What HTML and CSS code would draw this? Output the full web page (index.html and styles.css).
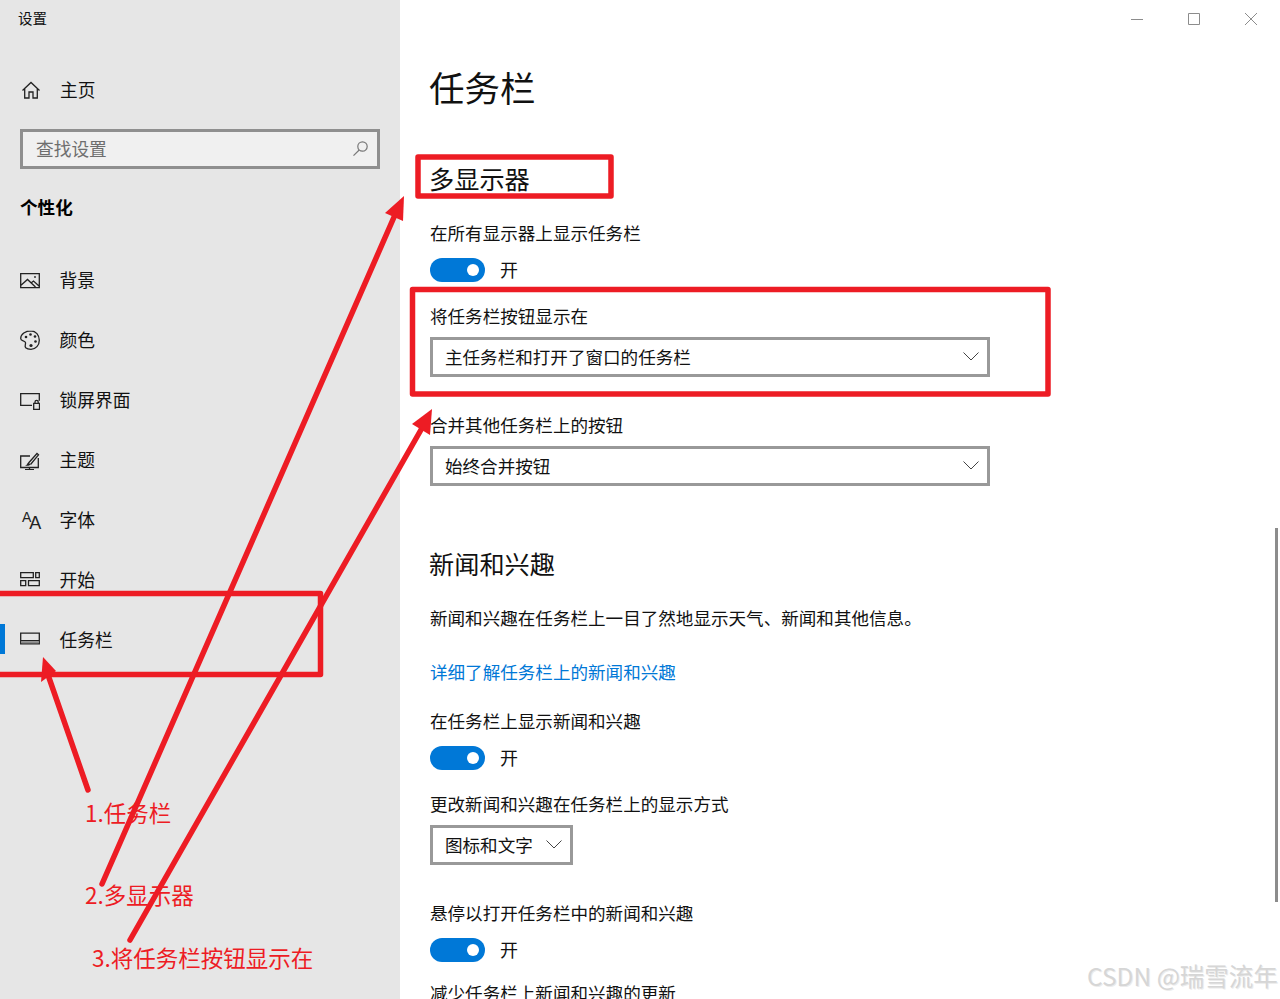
FILE: index.html
```html
<!DOCTYPE html>
<html lang="zh-CN">
<head>
<meta charset="utf-8">
<title>设置</title>
<link rel="stylesheet" href="styles.css">
</head>
<body>
<div class="window">
  <aside class="sidebar">
    <div class="app-title">设置</div>
    <div class="home">
      <svg class="icon" width="20" height="20" viewBox="0 0 20 20"><path d="M1.500 10.500 10 2.500l8.500 8M3.700 9v9h4.300v-6h4v6h4.300V9"/></svg>
      <span>主页</span>
    </div>
    <div class="search">
      <span>查找设置</span>
      <svg class="search-icon" width="17" height="17" viewBox="0 0 17 17"><circle cx="10.500" cy="6.500" r="4.700"/><path d="M7.200 10 1.500 15.700"/></svg>
    </div>
    <div class="section-title">个性化</div>
    <nav class="nav">
      <div class="nav-item">
        <svg class="icon" width="20" height="20" viewBox="0 0 20 20"><path d="M.7 3.700h18.600v14H.7zM.7 15.500 7.500 9.500l8 7.500M11 13l2.500-2 5.500 5"/><circle class="dot" cx="15" cy="7" r=".9"/></svg>
        <span>背景</span>
      </div>
      <div class="nav-item">
        <svg class="icon" width="20" height="20" viewBox="0 0 20 20"><path d="M11 .8C5.500.8.700 4 .7 8.500c0 3 4.300 1.800 4.800 4.200.4 2-1.300 3.300.2 5 1.500 1.500 3.500 1.600 5.300 1.600 4.800 0 8.300-4 8.300-9.100S15.800.8 11 .8z"/><circle class="dot" cx="6" cy="7" r="1.300"/><circle class="dot" cx="10.500" cy="4.500" r="1.300"/><circle class="dot" cx="15" cy="6.500" r="1.300"/><circle class="dot" cx="15.500" cy="11.500" r="1.300"/><circle class="dot" cx="11" cy="15.500" r="1.600"/></svg>
        <span>颜色</span>
      </div>
      <div class="nav-item">
        <svg class="icon" width="20" height="20" viewBox="0 0 20 20"><path d="M12 15.300H.7V3.700h18.600v7M13.700 13.300h5.800v6.200h-5.800zM15 13.300V12c0-2.300 3.200-2.300 3.200 0v1.300"/></svg>
        <span>锁屏界面</span>
      </div>
      <div class="nav-item">
        <svg class="icon" width="20" height="20" viewBox="0 0 20 20"><path d="M10 6H.7v11.500h17.600V8M5 19.600h9M9.500 17.500v2.100M8.500 13 17 3.500l1.500 1.300L10.500 14.500"/><path class="fill" d="M5 15.500c2.500 0 2-3 3.500-3l2 2c-1 1.500-3.500 1.500-5.500 1z"/></svg>
        <span>主题</span>
      </div>
      <div class="nav-item">
        <span class="font-icon"><span class="font-icon-s">A</span><span class="font-icon-l">A</span></span>
        <span>字体</span>
      </div>
      <div class="nav-item">
        <svg class="icon" width="20" height="20" viewBox="0 0 20 20"><path d="M.7 2.700h12.600v5H.7zM15.700 2.700h3.600v5h-3.600zM.7 10.700h5v5h-5zM8.500 10.700h10.800v5H8.500z"/></svg>
        <span>开始</span>
      </div>
      <div class="nav-item active">
        <svg class="icon" width="20" height="20" viewBox="0 0 20 20"><path d="M.7 3.200h18.600v10.600H.7zM.7 10.700h18.600"/><path class="shade" d="M1 12.200h18"/></svg>
        <span>任务栏</span>
      </div>
    </nav>
  </aside>

  <main class="content">
    <div class="caption-buttons">
      <svg width="12" height="12" viewBox="0 0 12 12"><path d="M0 6.500h12"/></svg>
      <svg width="12" height="12" viewBox="0 0 12 12"><path d="M.5.500h11v11H.5z"/></svg>
      <svg width="12" height="12" viewBox="0 0 12 12"><path d="M0 0l12 12M12 0 0 12"/></svg>
    </div>
    <h1 class="page-title">任务栏</h1>

    <h2 class="group-title first">多显示器</h2>
    <div class="label after-title">在所有显示器上显示任务栏</div>
    <div class="toggle-row"><span class="toggle"></span><span class="toggle-text">开</span></div>
    <div class="label after-toggle">将任务栏按钮显示在</div>
    <div class="select wide"><span>主任务栏和打开了窗口的任务栏</span><svg width="16" height="9" viewBox="0 0 16 9"><path d="M.5.500 8 8l7.500-7.500"/></svg></div>
    <div class="label after-select">合并其他任务栏上的按钮</div>
    <div class="select wide"><span>始终合并按钮</span><svg width="16" height="9" viewBox="0 0 16 9"><path d="M.5.500 8 8l7.500-7.500"/></svg></div>

    <h2 class="group-title second">新闻和兴趣</h2>
    <div class="label after-title">新闻和兴趣在任务栏上一目了然地显示天气、新闻和其他信息。</div>
    <div class="label link">详细了解任务栏上的新闻和兴趣</div>
    <div class="label after-link">在任务栏上显示新闻和兴趣</div>
    <div class="toggle-row"><span class="toggle"></span><span class="toggle-text">开</span></div>
    <div class="label after-toggle">更改新闻和兴趣在任务栏上的显示方式</div>
    <div class="select narrow"><span>图标和文字</span><svg width="16" height="9" viewBox="0 0 16 9"><path d="M.5.500 8 8l7.500-7.500"/></svg></div>
    <div class="label after-select">悬停以打开任务栏中的新闻和兴趣</div>
    <div class="toggle-row"><span class="toggle"></span><span class="toggle-text">开</span></div>
    <div class="label after-last">减少任务栏上新闻和兴趣的更新</div>
    <div class="scrollbar"></div>
  </main>
</div>

<svg class="annotations" width="1280" height="999" viewBox="0 0 1280 999">
  <g class="marks">
    <rect x="418" y="157" width="193" height="39"/>
    <rect x="412.500" y="289.500" width="635.500" height="104.500"/>
    <path d="M-5 593.500H320.500V674.500H-5"/>
    <path d="M88 790 47 672"/>
    <path d="M102 884 398 208"/>
    <path d="M130 940 426 421"/>
  </g>
  <g class="heads">
    <path d="M43 657 41 682 56 671z"/>
    <path d="M404 196 385 213 403 221z"/>
    <path d="M432 409 412 424 430 435z"/>
  </g>
</svg>
<div class="note note-1">1.任务栏</div>
<div class="note note-2">2.多显示器</div>
<div class="note note-3">3.将任务栏按钮显示在</div>
<div class="watermark">CSDN @瑞雪流年</div>
</body>
</html>
```
FILE: styles.css
```css
* { box-sizing: border-box; }
html, body { margin: 0; height: 100%; overflow: hidden; }
body {
  font-family: "Noto Sans CJK SC", "Noto Sans", sans-serif;
  font-size: 17.570px;
  color: #111;
  background: #fff;
}
.window { display: flex; height: 999px; }

.sidebar { width: 400px; flex: none; background: #e6e6e6; }
.app-title { height: 38px; line-height: 36px; padding-left: 18px; font-size: 14.500px; }
.home { display: flex; align-items: center; gap: 19px; height: 60px; margin-top: 22px; padding: 0 0 2px 21px; font-size: 17.700px; }
.home .icon { margin-bottom: -2px; }
.icon { flex: none; fill: none; stroke: #222; stroke-width: 1.300; }
.icon .dot, .icon .fill { fill: #222; stroke: none; }
.icon .shade { stroke: #888; stroke-width: 1.800; }
.search {
  display: flex; align-items: center; justify-content: space-between;
  width: 360px; height: 40px; margin: 9px 0 0 20px; padding: 0 8px 2px 13px;
  border: 3px solid #8f8f8f; background: #f0f0f0; color: #6e6e6e; font-size: 17.700px;
}
.search-icon { fill: none; stroke: #777; stroke-width: 1.200; margin-left: 2px; }
.section-title { height: 40px; line-height: 38px; margin-top: 19px; padding-left: 20px; font-size: 17.600px; font-weight: 700; color: #000; }
.nav { margin-top: 22px; }
.nav-item { position: relative; display: flex; align-items: center; gap: 19.400px; height: 60px; padding: 0 0 2px 20px; font-size: 17.750px; }
.nav-item .icon, .nav-item .font-icon { position: relative; top: 1px; }
.nav-item.active::before { content: ""; position: absolute; left: 0; top: 14px; width: 5px; height: 30px; background: #0078d7; }
.font-icon { display: flex; align-items: flex-start; width: 20px; height: 20px; padding-left: 2px; font-family: "Liberation Sans", sans-serif; color: #222; }
.font-icon-s { font-size: 14px; line-height: 14px; }
.font-icon-l { font-size: 18px; line-height: 18px; margin: 4px 0 0 -2px; }

.content { position: relative; flex: 1; padding: 64px 0 0 30px; }
.caption-buttons { position: absolute; top: 13px; left: 731px; display: flex; gap: 45px; }
.caption-buttons svg { fill: none; stroke: #8c8c8c; stroke-width: 1; }
.page-title { margin: 0 0 0 -1px; height: 50px; line-height: 46px; font-size: 35.500px; font-weight: 400; }
.group-title { margin: 0 0 0 -1px; height: 36px; line-height: 33px; font-size: 25.200px; font-weight: 400; }
.group-title.first { margin-top: 48px; }
.group-title.second { margin-top: 61px; }
.label { height: 26px; line-height: 26px; white-space: nowrap; }
.after-title { margin-top: 22px; }
.after-toggle { margin-top: 21px; }
.after-select { margin-top: 35px; }
.after-link { margin-top: 23px; }
.after-last { margin-top: 18px; }
.link { margin-top: 28px; color: #0078d7; }
.toggle-row { display: flex; align-items: center; gap: 15px; height: 24px; margin-top: 12px; }
.toggle-text { margin-top: -2px; font-size: 18px; }
.toggle { position: relative; width: 55px; height: 24px; border-radius: 12px; background: #0078d7; }
.toggle::after { content: ""; position: absolute; right: 6px; top: 6px; width: 12px; height: 12px; border-radius: 50%; background: #fff; }
.select {
  display: flex; align-items: center; justify-content: space-between;
  height: 40px; margin-top: 8px; padding: 0 8px 2px 12px;
  border: 3px solid #999; background: #fff;
}
.select svg { flex: none; margin-top: 1px; fill: none; stroke: #444; stroke-width: 1; }
.select.wide { width: 560px; }
.select.narrow { width: 143px; }
.scrollbar { position: absolute; left: 875px; top: 528px; width: 3px; height: 374px; background: #8c8c8c; }

.annotations { position: absolute; left: 0; top: 0; pointer-events: none; }
.marks { fill: none; stroke: #ed1c24; stroke-width: 5.500; stroke-linecap: round; stroke-linejoin: round; }
.heads { fill: #ed1c24; stroke: none; }
.note { position: absolute; color: #ed1c24; font-size: 22.500px; line-height: 30px; white-space: nowrap; }
.note-1 { left: 85px; top: 797px; }
.note-2 { left: 85px; top: 879px; }
.note-3 { left: 92px; top: 942px; }
.watermark { position: absolute; left: 1087px; top: 959px; font-size: 24.500px; line-height: 34px; color: #d6d6d6; white-space: nowrap; text-shadow: 1px 1px 0 #ececec; }
```
